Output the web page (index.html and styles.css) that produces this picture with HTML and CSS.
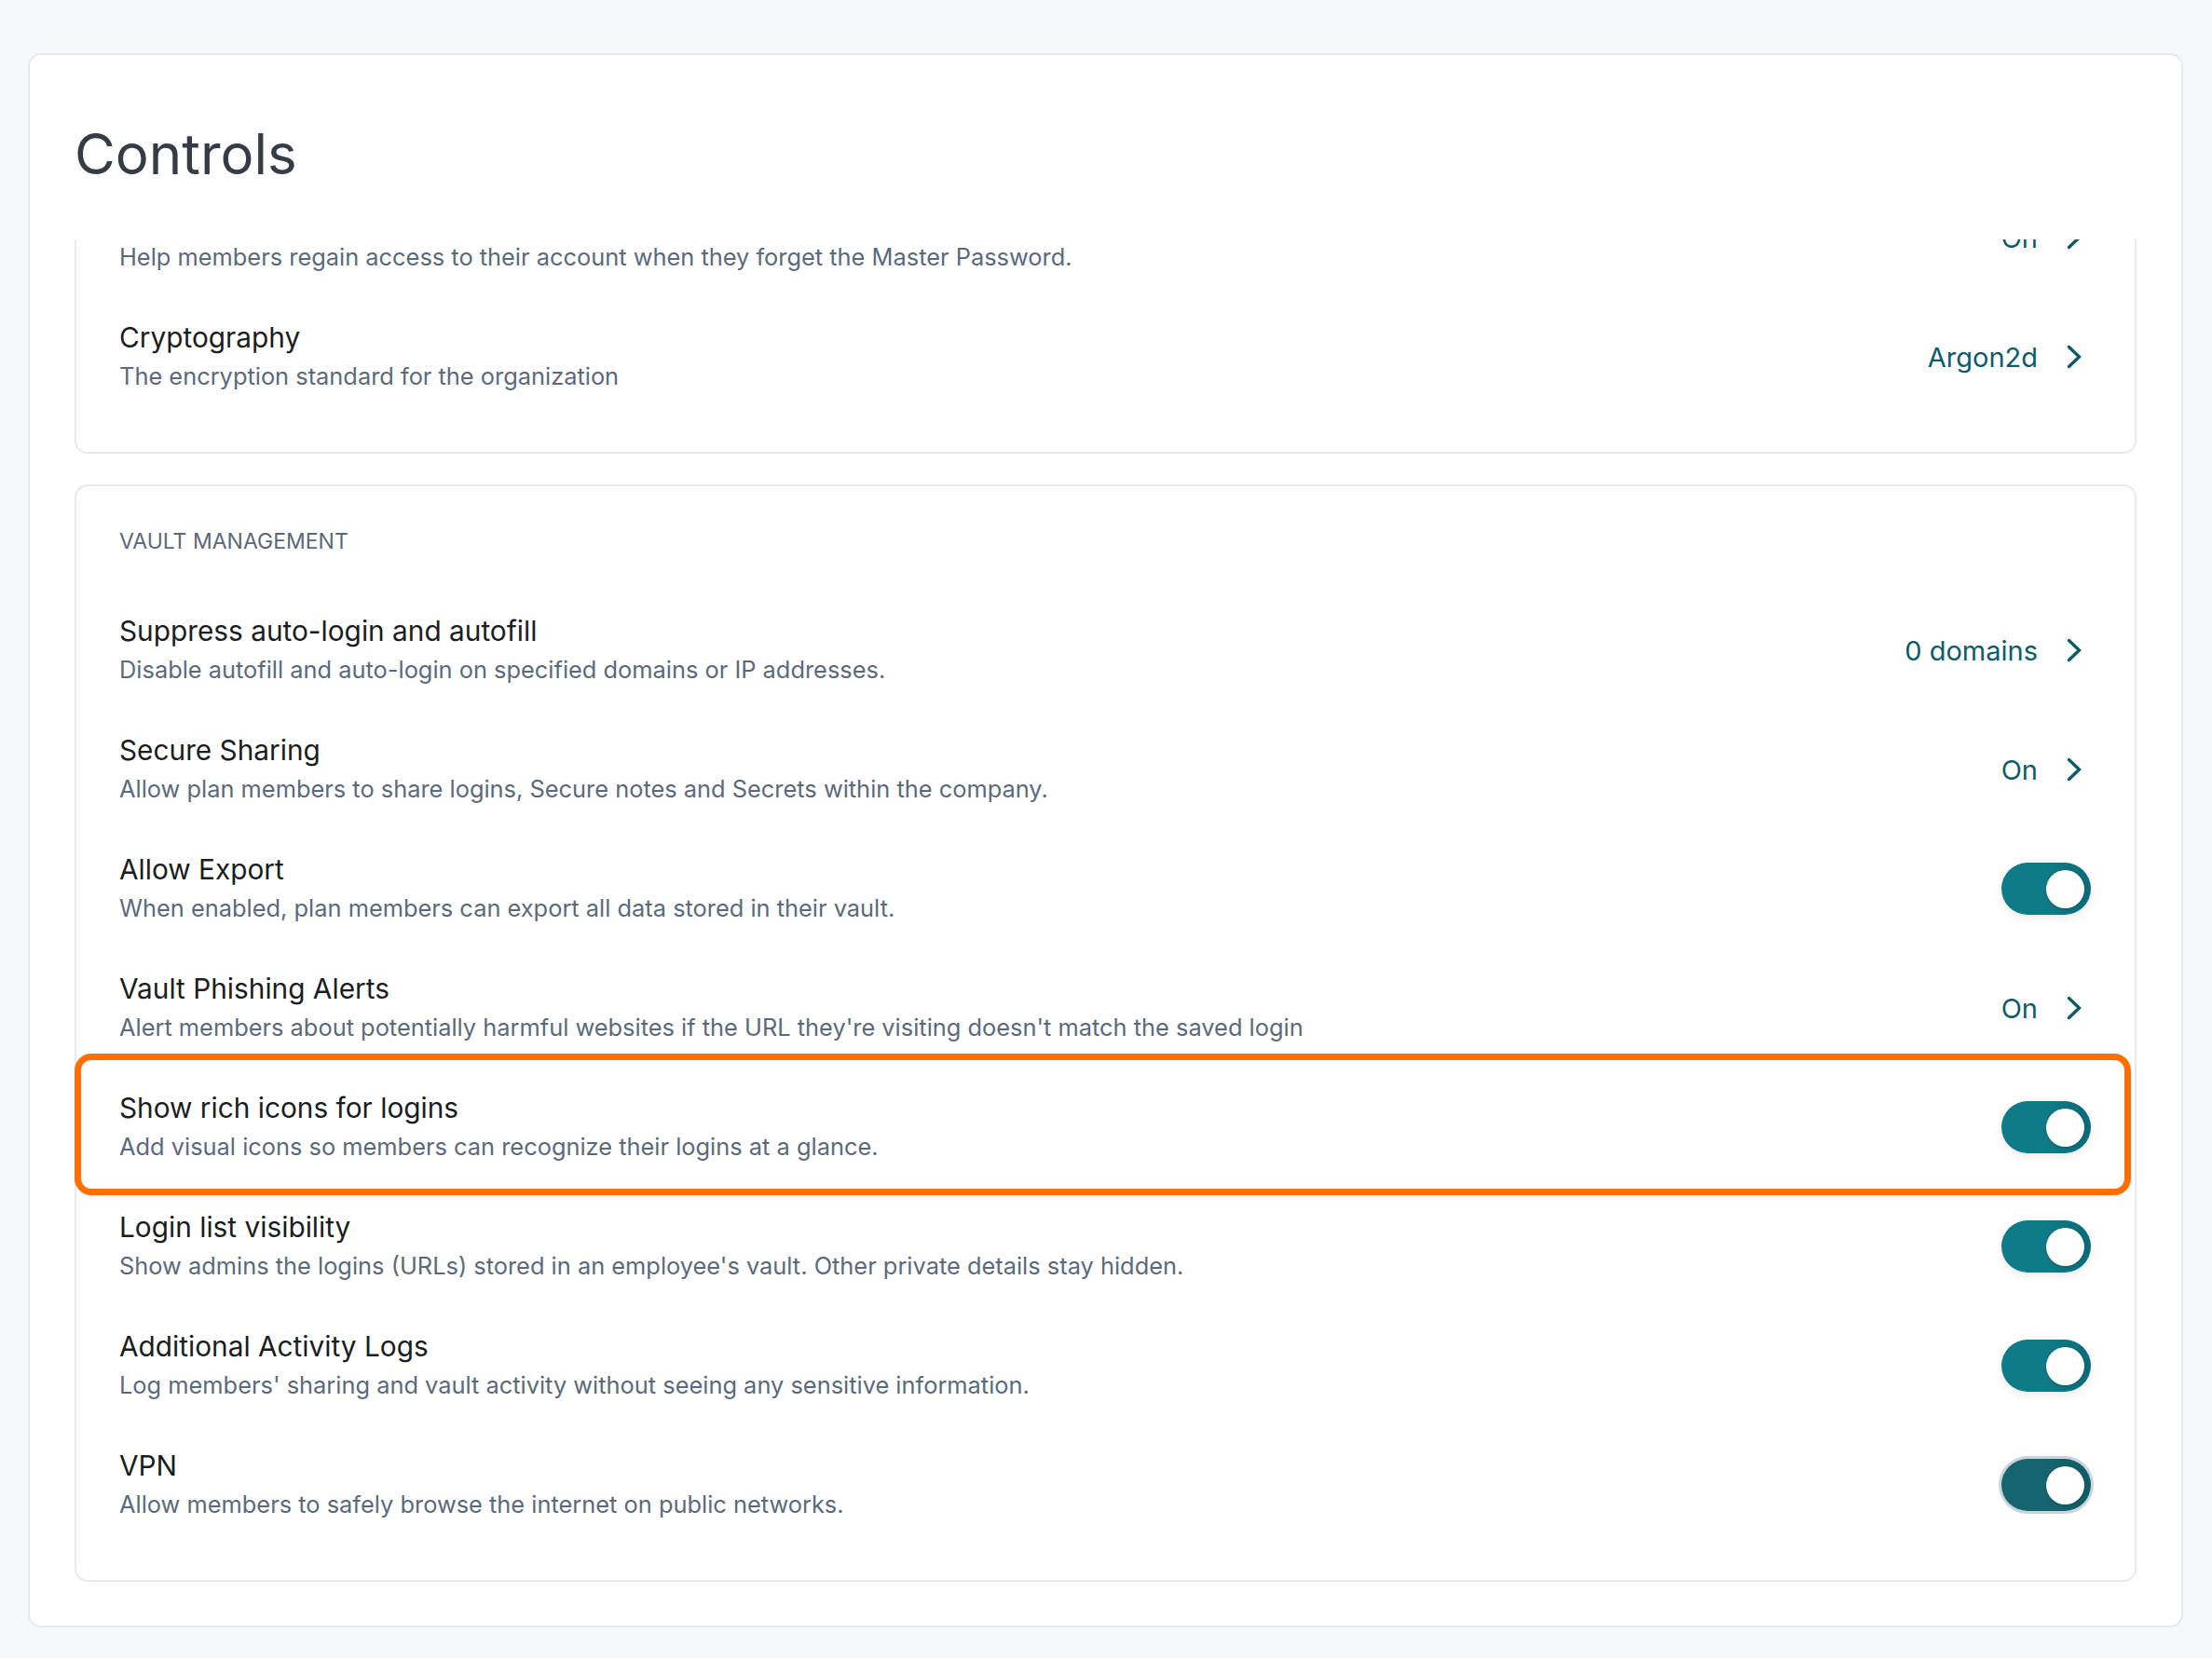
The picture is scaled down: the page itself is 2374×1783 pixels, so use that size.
FILE: index.html
```html
<!DOCTYPE html>
<html lang="en">
<head>
    <meta charset="UTF-8">
    <title>Controls</title>
    <link rel="stylesheet" href="styles.css">
</head>
<body>
    <div class="page">
        <div class="panel">
            <h1 class="panel-title">Controls</h1>

            <div class="scroll-area">
                <!-- account section (scrolled past) -->
                <div class="card card-scrolled">
                    <div class="row">
                        <div class="row-text">
                            <div class="row-title">Account recovery</div>
                            <div class="row-desc">Help members regain access to their account when they forget the Master Password.</div>
                        </div>
                        <a class="row-value" href="#">On
                            <svg class="chevron" viewBox="0 0 16 26"><polyline points="2.5,2.5 13.5,13 2.5,23.5"/></svg>
                        </a>
                    </div>
                    <div class="row">
                        <div class="row-text">
                            <div class="row-title">Cryptography</div>
                            <div class="row-desc">The encryption standard for the organization</div>
                        </div>
                        <a class="row-value" href="#">Argon2d
                            <svg class="chevron" viewBox="0 0 16 26"><polyline points="2.5,2.5 13.5,13 2.5,23.5"/></svg>
                        </a>
                    </div>
                </div>

                <!-- vault management -->
                <div class="card">
                    <div class="card-label">VAULT MANAGEMENT</div>

                    <div class="row">
                        <div class="row-text">
                            <div class="row-title">Suppress auto-login and autofill</div>
                            <div class="row-desc">Disable autofill and auto-login on specified domains or IP addresses.</div>
                        </div>
                        <a class="row-value" href="#">0 domains
                            <svg class="chevron" viewBox="0 0 16 26"><polyline points="2.5,2.5 13.5,13 2.5,23.5"/></svg>
                        </a>
                    </div>

                    <div class="row">
                        <div class="row-text">
                            <div class="row-title">Secure Sharing</div>
                            <div class="row-desc">Allow plan members to share logins, Secure notes and Secrets within the company.</div>
                        </div>
                        <a class="row-value" href="#">On
                            <svg class="chevron" viewBox="0 0 16 26"><polyline points="2.5,2.5 13.5,13 2.5,23.5"/></svg>
                        </a>
                    </div>

                    <div class="row">
                        <div class="row-text">
                            <div class="row-title">Allow Export</div>
                            <div class="row-desc">When enabled, plan members can export all data stored in their vault.</div>
                        </div>
                        <span class="toggle on"><span class="knob"></span></span>
                    </div>

                    <div class="row">
                        <div class="row-text">
                            <div class="row-title">Vault Phishing Alerts</div>
                            <div class="row-desc">Alert members about potentially harmful websites if the URL they're visiting doesn't match the saved login</div>
                        </div>
                        <a class="row-value" href="#">On
                            <svg class="chevron" viewBox="0 0 16 26"><polyline points="2.5,2.5 13.5,13 2.5,23.5"/></svg>
                        </a>
                    </div>

                    <div class="row highlighted">
                        <div class="row-text">
                            <div class="row-title">Show rich icons for logins</div>
                            <div class="row-desc">Add visual icons so members can recognize their logins at a glance.</div>
                        </div>
                        <span class="toggle on"><span class="knob"></span></span>
                    </div>

                    <div class="row">
                        <div class="row-text">
                            <div class="row-title">Login list visibility</div>
                            <div class="row-desc">Show admins the logins (URLs) stored in an employee's vault. Other private details stay hidden.</div>
                        </div>
                        <span class="toggle on"><span class="knob"></span></span>
                    </div>

                    <div class="row">
                        <div class="row-text">
                            <div class="row-title">Additional Activity Logs</div>
                            <div class="row-desc">Log members' sharing and vault activity without seeing any sensitive information.</div>
                        </div>
                        <span class="toggle on"><span class="knob"></span></span>
                    </div>

                    <div class="row">
                        <div class="row-text">
                            <div class="row-title">VPN</div>
                            <div class="row-desc">Allow members to safely browse the internet on public networks.</div>
                        </div>
                        <span class="toggle on focused"><span class="knob"></span></span>
                    </div>
                </div>
            </div>
        </div>
    </div>
</body>
</html>
```

FILE: styles.css
```css
html {
    background-color: #fff;
}
body {
    margin: 0;
    background-color: #f7f8fa;
    font-family: Inter, "Noto Sans", sans-serif;
    color: #1c2025;
}
.page {
    padding: 57px 31px 33px 30px;
}
.panel {
    background-color: #fff;
    border: 2px solid #e7e9ec;
    border-radius: 14px;
    padding: 69px 48px 47px 48px;
}
.panel-title {
    margin: 0 0 55px 0;
    font-size: 60px;
    font-weight: 400;
    line-height: 74px;
    color: #363c45;
}
.scroll-area {
    overflow: hidden;
}
.card {
    border: 2px solid #e7e9ec;
    border-radius: 14px;
    padding: 44px 47px 38px 46px;
}
.card-scrolled {
    margin-top: -112px;
    margin-bottom: 33px;
}
.card-label {
    font-size: 23px;
    line-height: 30px;
    color: #5b6878;
    margin-bottom: 38px;
}
/* setting rows */
.row {
    display: flex;
    align-items: center;
    justify-content: space-between;
    height: 128px;
    position: relative;
}
.row-title {
    font-size: 29.8px;
    line-height: 40px;
    color: #1a1d21;
}
.row-desc {
    font-size: 25.4px;
    line-height: 40px;
    margin-top: 2px;
    color: #5a6a7c;
}
.row-value {
    display: flex;
    align-items: center;
    gap: 31px;
    margin-right: 10px;
    font-size: 29px;
    color: #0b5c68;
    text-decoration: none;
}
.chevron {
    width: 16px;
    height: 26px;
    fill: none;
    stroke: #0b5c68;
    stroke-width: 3.4;
    stroke-linecap: round;
}
/* toggle switch */
.toggle {
    display: block;
    position: relative;
    width: 96px;
    height: 56px;
    border-radius: 28px;
    background: linear-gradient(90deg, #0f7b88 50%, #0c6a76);
    box-shadow: 0 4px 10px rgba(0, 0, 0, 0.08);
    flex-shrink: 0;
}
.toggle .knob {
    position: absolute;
    top: 8px;
    right: 7px;
    width: 41px;
    height: 41px;
    border-radius: 50%;
    background-color: #fff;
    box-shadow: 0 1px 3px rgba(0, 0, 0, 0.2);
}
.toggle.focused {
    background: linear-gradient(90deg, #15646f 50%, #105b66);
    box-shadow: 0 0 0 3px #cdd3db;
}
/* orange annotation round the highlighted row */
.highlighted::after {
    content: "";
    position: absolute;
    top: -15px;
    bottom: -9px;
    left: -48px;
    right: -43px;
    border: 7px solid #ff6f00;
    border-radius: 18px;
    pointer-events: none;
}
```
